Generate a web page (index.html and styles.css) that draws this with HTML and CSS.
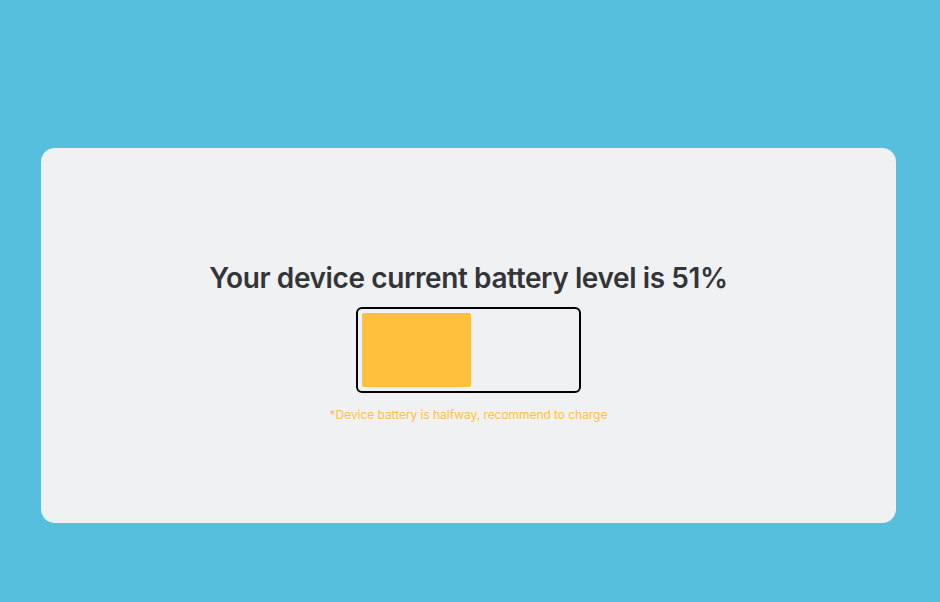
FILE: index.html
```html
<!DOCTYPE html>
<html>
<head>
<meta charset="utf-8">
<link rel="stylesheet" href="styles.css">
</head>
<body>
<div class="card">
  <h1 class="title">Your device current battery level is 51%</h1>
  <div class="battery">
    <div class="level" style="width:51%"></div>
  </div>
  <p class="note">*Device battery is halfway, recommend to charge</p>
</div>
</body>
</html>
```
FILE: styles.css
```css
html, body {
  margin: 0;
  padding: 0;
}
body {
  background: #56bfdd;
  height: 602px;
  padding-top: 148px;
  box-sizing: border-box;
  font-family: Inter, "Noto Sans", sans-serif;
}
.card {
  margin-left: 41px;
  width: 855px;
  height: 375px;
  background: #f0f1f3;
  border-radius: 14px;
  display: flex;
  flex-direction: column;
  align-items: center;
  padding-top: 113px;
  box-sizing: border-box;
}
.title {
  margin: 0;
  font-size: 28px;
  font-weight: 600;
  color: #333539;
  line-height: 34px;
  letter-spacing: -0.4px;
}
.battery {
  margin-top: 12px;
  width: 225px;
  height: 86px;
  box-sizing: border-box;
  border: 2px solid #000;
  border-radius: 6px;
  padding: 4px;
  display: flex;
}
.level {
  height: 100%;
  background: #ffc13d;
  border-radius: 2px;
}
.note {
  margin: 14px 0 0;
  font-size: 12px;
  color: #ffc13d;
  line-height: 15px;
  letter-spacing: -0.05px;
}
```
